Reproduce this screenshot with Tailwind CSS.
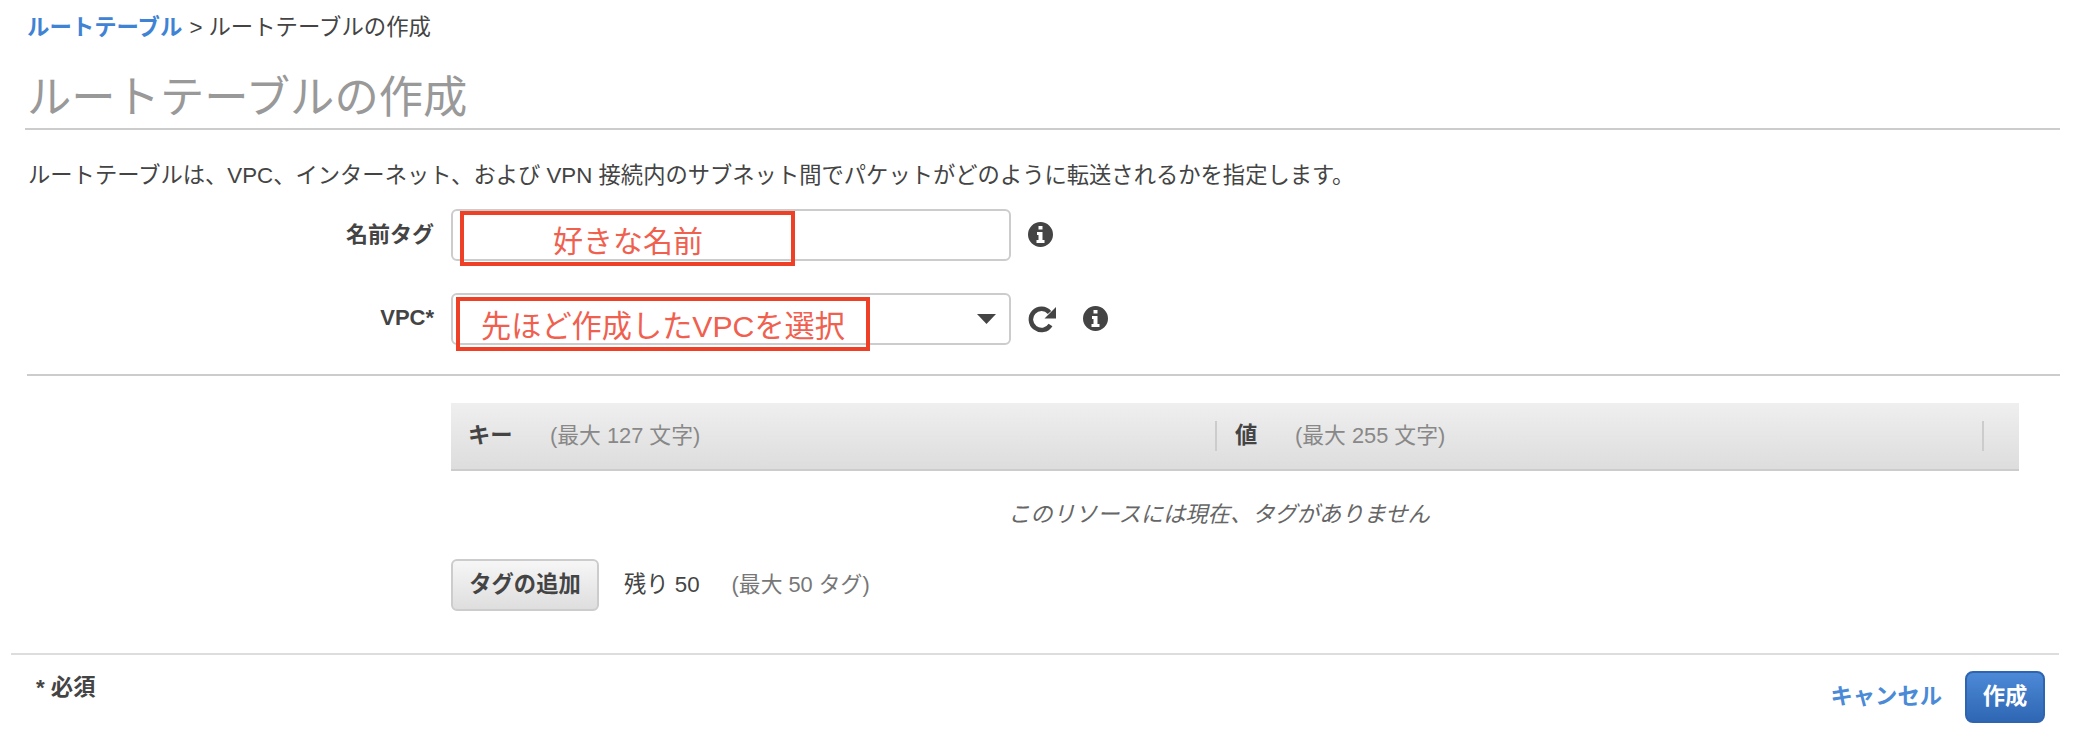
<!DOCTYPE html>
<html>
<head>
  <meta charset="UTF-8">
  <script src="https://cdn.jsdelivr.net/npm/@tailwindcss/browser@4"></script>
</head>
<body class="bg-white">
  <div class="w-[2088px] h-[751px] overflow-hidden font-['Liberation_Sans','Noto_Sans_CJK_JP',sans-serif] text-[22.3px] text-[#444]">

    <div class="h-[54px] pl-[27px] pt-[1px] flex items-center">
      <a class="font-bold text-[#3f83d5] text-[22.4px]">ルートテーブル</a>
      <span class="ml-[7px] mr-[6px]">&gt;</span>
      <span class="text-[22.4px]">ルートテーブルの作成</span>
    </div>

    <div class="ml-[25px] mr-[28px] h-[76px] pt-[14px] border-b-2 border-[#ccc] flex items-center">
      <h1 class="pl-[2px] text-[44.3px] text-[#999]">ルートテーブルの作成</h1>
    </div>

    <p class="ml-[28px] mt-[32px] h-[28px] leading-[28px] whitespace-nowrap">ルートテーブルは、VPC、インターネット、および VPN 接続内のサブネット間でパケットがどのように転送されるかを指定します。</p>

    <!-- name tag -->
    <div class="mt-[19px] flex h-[52px]">
      <label class="w-[434px] text-[22px] text-right font-bold leading-[52px]">名前タグ</label>
      <div class="relative ml-[17px] w-[560px] border-2 border-[#ccc] rounded-[6px]">
        <div class="absolute left-[7px] top-0 w-[335px] h-[55px] border-4 border-[#ee4027] text-[30px] leading-[54px] text-[#f0604f] pl-[89px]">好きな名前</div>
      </div>
      <svg class="ml-[17px] mt-[13px] w-[25px] h-[25px]" viewBox="0 0 25 25"><path fill="#444" fill-rule="evenodd" d="M12.5 0a12.5 12.5 0 1 0 0 25a12.5 12.5 0 0 0 0-25ZM10.5 4h4v3.6h-4ZM9 10h5.5v8H16.5v3H8.5v-3h2v-5H9Z"/></svg>
    </div>

    <!-- vpc -->
    <div class="mt-[32px] flex h-[52px]">
      <label class="w-[434px] text-[22px] text-right font-bold leading-[50px]">VPC*</label>
      <div class="relative ml-[17px] w-[560px] border-2 border-[#ccc] rounded-[6px]">
        <div class="absolute left-[3px] top-[2px] w-[414px] h-[54px] border-4 border-[#ee4027] text-[30.2px] leading-[52px] text-[#f0604f] pl-[21px] whitespace-nowrap">先ほど作成したVPCを選択</div>
        <svg class="absolute right-[13px] top-[19px] w-[19px] h-[10px]" viewBox="0 0 19 10"><path fill="#444" d="M0 0h19L9.5 10Z"/></svg>
      </div>
      <svg class="ml-[17px] mt-[13px] w-[29px] h-[27px]" viewBox="0 0 29 27"><path fill="none" stroke="#444" stroke-width="4.5" d="M22.5 19a10.600 10.600 0 1 1 -1-12.5"/><path fill="#444" d="M28 1v11.500H16.500Z"/></svg>
      <svg class="ml-[26px] mt-[13px] w-[25px] h-[25px]" viewBox="0 0 25 25"><path fill="#444" fill-rule="evenodd" d="M12.5 0a12.5 12.5 0 1 0 0 25a12.5 12.5 0 0 0 0-25ZM10.5 4h4v3.6h-4ZM9 10h5.5v8H16.5v3H8.5v-3h2v-5H9Z"/></svg>
    </div>

    <div class="mt-[29px] ml-[27px] mr-[28px] border-t-2 border-[#ccc]"></div>

    <!-- tags table -->
    <div class="mt-[27px] ml-[451px] w-[1568px] h-[68px] border-b-2 border-[#ccc] bg-gradient-to-b from-[#efefef] to-[#dddddd] flex items-center">
      <div class="w-[766px] h-[30px] flex items-center border-r-2 border-[#ccc] pl-[17px]">
        <span class="font-bold w-[82px]">キー</span>
        <span class="text-[#888] text-[21.8px]">(最大 127 文字)</span>
      </div>
      <div class="w-[767px] h-[30px] flex items-center border-r-2 border-[#ccc] pl-[18px]">
        <span class="font-bold w-[60px]">値</span>
        <span class="text-[#888] text-[21.8px]">(最大 255 文字)</span>
      </div>
    </div>

    <p class="mt-[29px] ml-[451px] w-[1536px] h-[30px] leading-[30px] text-center italic text-[#666]">このリソースには現在、タグがありません</p>

    <div class="mt-[29px] ml-[451px] flex items-center h-[52px]">
      <button class="w-[148px] h-[52px] border-2 border-[#ccc] rounded-[6px] bg-gradient-to-b from-[#f6f6f6] to-[#dedede] font-bold">タグの追加</button>
      <span class="ml-[25px]">残り 50</span>
      <span class="ml-[32px] text-[#777] text-[21.8px]">(最大 50 タグ)</span>
    </div>

    <div class="mt-[42px] ml-[11px] mr-[29px] border-t-2 border-[#ddd]"></div>

    <div class="flex items-start justify-between ml-[36px] mr-[43px]">
      <span class="mt-[18px] font-bold leading-[30px]">* 必須</span>
      <div class="mt-[16px] flex items-center">
        <a class="font-bold text-[#4a8ad6]">キャンセル</a>
        <button class="ml-[23px] w-[80px] h-[52px] border-2 border-[#2e64b0] rounded-[8px] bg-gradient-to-b from-[#4c89d6] to-[#2f67b4] text-white font-bold">作成</button>
      </div>
    </div>
  </div>
</body>
</html>
